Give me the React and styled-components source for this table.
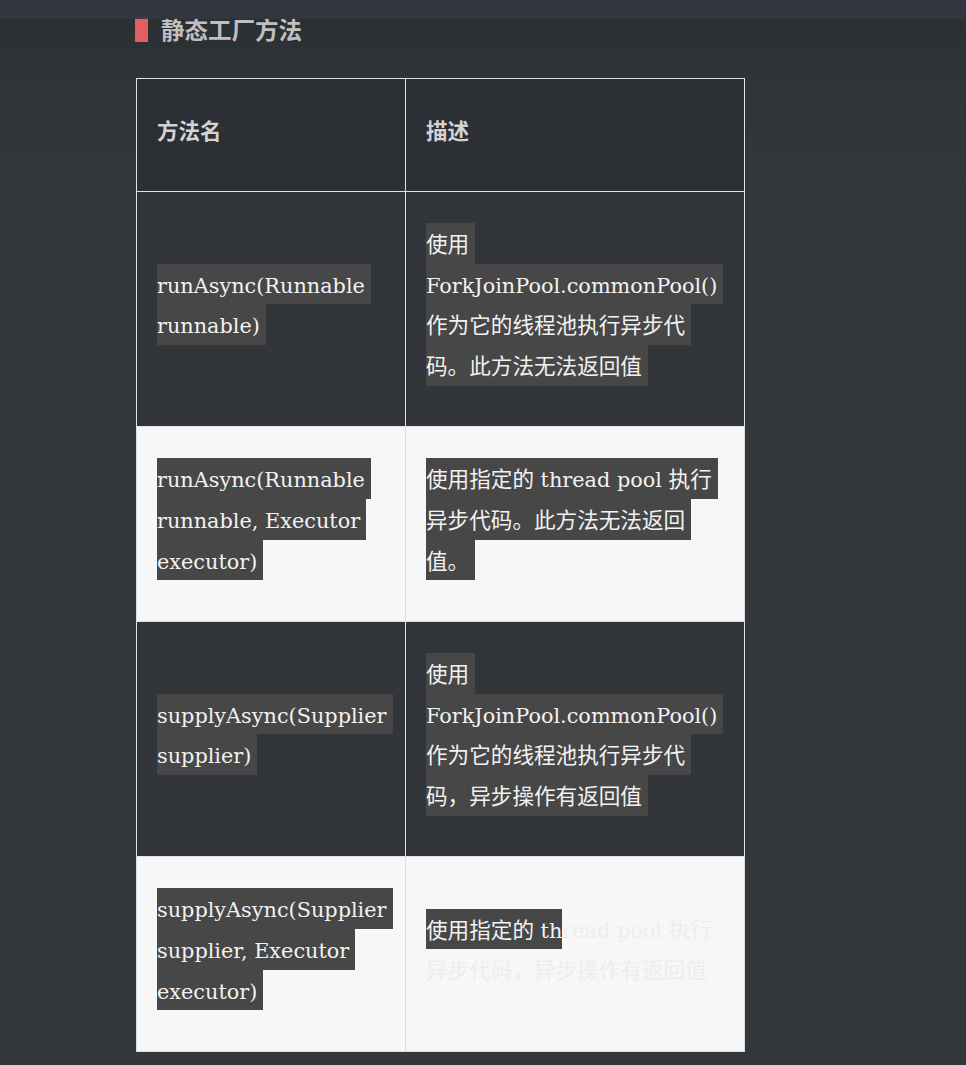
import React from "react";
import styled, { createGlobalStyle } from "styled-components";

const GlobalStyle = createGlobalStyle`
  html, body { margin: 0; padding: 0; }
  body {
    min-height: 1065px;
    background: linear-gradient(#2a2e31 0px, #2b2f32 20px, #30353a 90px, #32373b 180px, #32373b 100%);
    font-family: "Noto Sans CJK SC", sans-serif;
  }
`;

const TopBar = styled.div`
  position: fixed;
  top: 0;
  left: 0;
  right: 0;
  height: 19px;
  background: rgba(52, 55, 65, 0.93);
  z-index: 5;
`;

const Page = styled.main`
  padding: 16px 0 15px 135px;
`;

const Heading = styled.h2`
  display: flex;
  align-items: center;
  gap: 13px;
  margin: 0;
  height: 26px;
  font-family: "Noto Sans CJK SC", sans-serif;
  font-size: 23.5px;
  font-weight: 700;
  line-height: 26px;
  color: #bfbfbf;
`;

const Marker = styled.span`
  width: 13px;
  height: 26px;
  background: #e25e61;
  flex: none;
`;

const Table = styled.table`
  margin: 36px 0 0 1px;
  width: 608px;
  table-layout: fixed;
  border-collapse: collapse;
  border: 1px solid #e2e2e2;
`;

const HeadCell = styled.th`
  padding: 31px 20px 40px;
  border: 1px solid #e2e2e2;
  background: #2c2f33;
  text-align: left;
  vertical-align: middle;
  font-family: "Noto Sans CJK SC", sans-serif;
  font-weight: 700;
  font-size: 21.5px;
  line-height: 40.75px;
  color: #d3d3d3;
`;

const Row = styled.tr`
  background: ${(p) => (p.$light ? "#f7f7f7" : "#32363a")};
`;

const Cell = styled.td`
  padding: 31px 20px 40.4px;
  border: 1px solid ${(p) => (p.$light ? "#dcdcdc" : "#e2e2e2")};
  vertical-align: middle;
  font-family: "Noto Sans CJK SC", "DejaVu Serif", serif;
  font-size: 21.6px;
  color: #ebebeb;
`;

const Line = styled.div`
  display: flex;
  height: 40.75px;
  line-height: 40.75px;
  white-space: pre;
`;

const Mark = styled.span`
  background: #474747;
  color: #f2f2f2;
  padding-right: ${(p) => (p.$tail ? "6px" : "0")};
`;

const Plain = styled.span`
  color: #ededed;
`;

const Latin = styled.span`
  font-family: "DejaVu Serif", serif;
  font-size: 20.8px;
`;

const CJK_RUN = /([\u3000-\u303f\u4e00-\u9fff\uff00-\uffef]+)/;

function Script({ text }) {
  return text
    .split(CJK_RUN)
    .filter(Boolean)
    .map((part, i) =>
      CJK_RUN.test(part) ? <span key={i}>{part}</span> : <Latin key={i}>{part}</Latin>
    );
}

const full = (lines) => lines.map((t) => [{ text: t, mark: true, tail: true }]);

const rows = [
  {
    light: false,
    method: full(["runAsync(Runnable", "runnable)"]),
    desc: full(["使用", "ForkJoinPool.commonPool()", "作为它的线程池执行异步代", "码。此方法无法返回值"]),
  },
  {
    light: true,
    method: full(["runAsync(Runnable", "runnable, Executor", "executor)"]),
    desc: full(["使用指定的 thread pool 执行", "异步代码。此方法无法返回", "值。"]),
  },
  {
    light: false,
    method: full(["supplyAsync(Supplier", "supplier)"]),
    desc: full(["使用", "ForkJoinPool.commonPool()", "作为它的线程池执行异步代", "码，异步操作有返回值"]),
  },
  {
    light: true,
    method: full(["supplyAsync(Supplier", "supplier, Executor", "executor)"]),
    desc: [
      [
        { text: "使用指定的 th", mark: true, tail: false },
        { text: "read pool 执行", mark: false },
      ],
      [{ text: "异步代码，异步操作有返回值", mark: false }],
    ],
  },
];

function Lines({ lines }) {
  return lines.map((segs, i) => (
    <Line key={i}>
      {segs.map((s, j) =>
        s.mark ? (
          <Mark key={j} $tail={s.tail}>
            <Script text={s.text} />
          </Mark>
        ) : (
          <Plain key={j}>
            <Script text={s.text} />
          </Plain>
        )
      )}
    </Line>
  ));
}

export default function App() {
  return (
    <>
      <GlobalStyle />
      <TopBar />
      <Page>
        <Heading>
          <Marker />
          静态工厂方法
        </Heading>
        <Table>
          <colgroup>
            <col style={{ width: "269px" }} />
            <col style={{ width: "339px" }} />
          </colgroup>
          <thead>
            <tr>
              <HeadCell>方法名</HeadCell>
              <HeadCell>描述</HeadCell>
            </tr>
          </thead>
          <tbody>
            {rows.map((r, i) => (
              <Row key={i} $light={r.light}>
                <Cell $light={r.light}>
                  <Lines lines={r.method} />
                </Cell>
                <Cell $light={r.light}>
                  <Lines lines={r.desc} />
                </Cell>
              </Row>
            ))}
          </tbody>
        </Table>
      </Page>
    </>
  );
}
